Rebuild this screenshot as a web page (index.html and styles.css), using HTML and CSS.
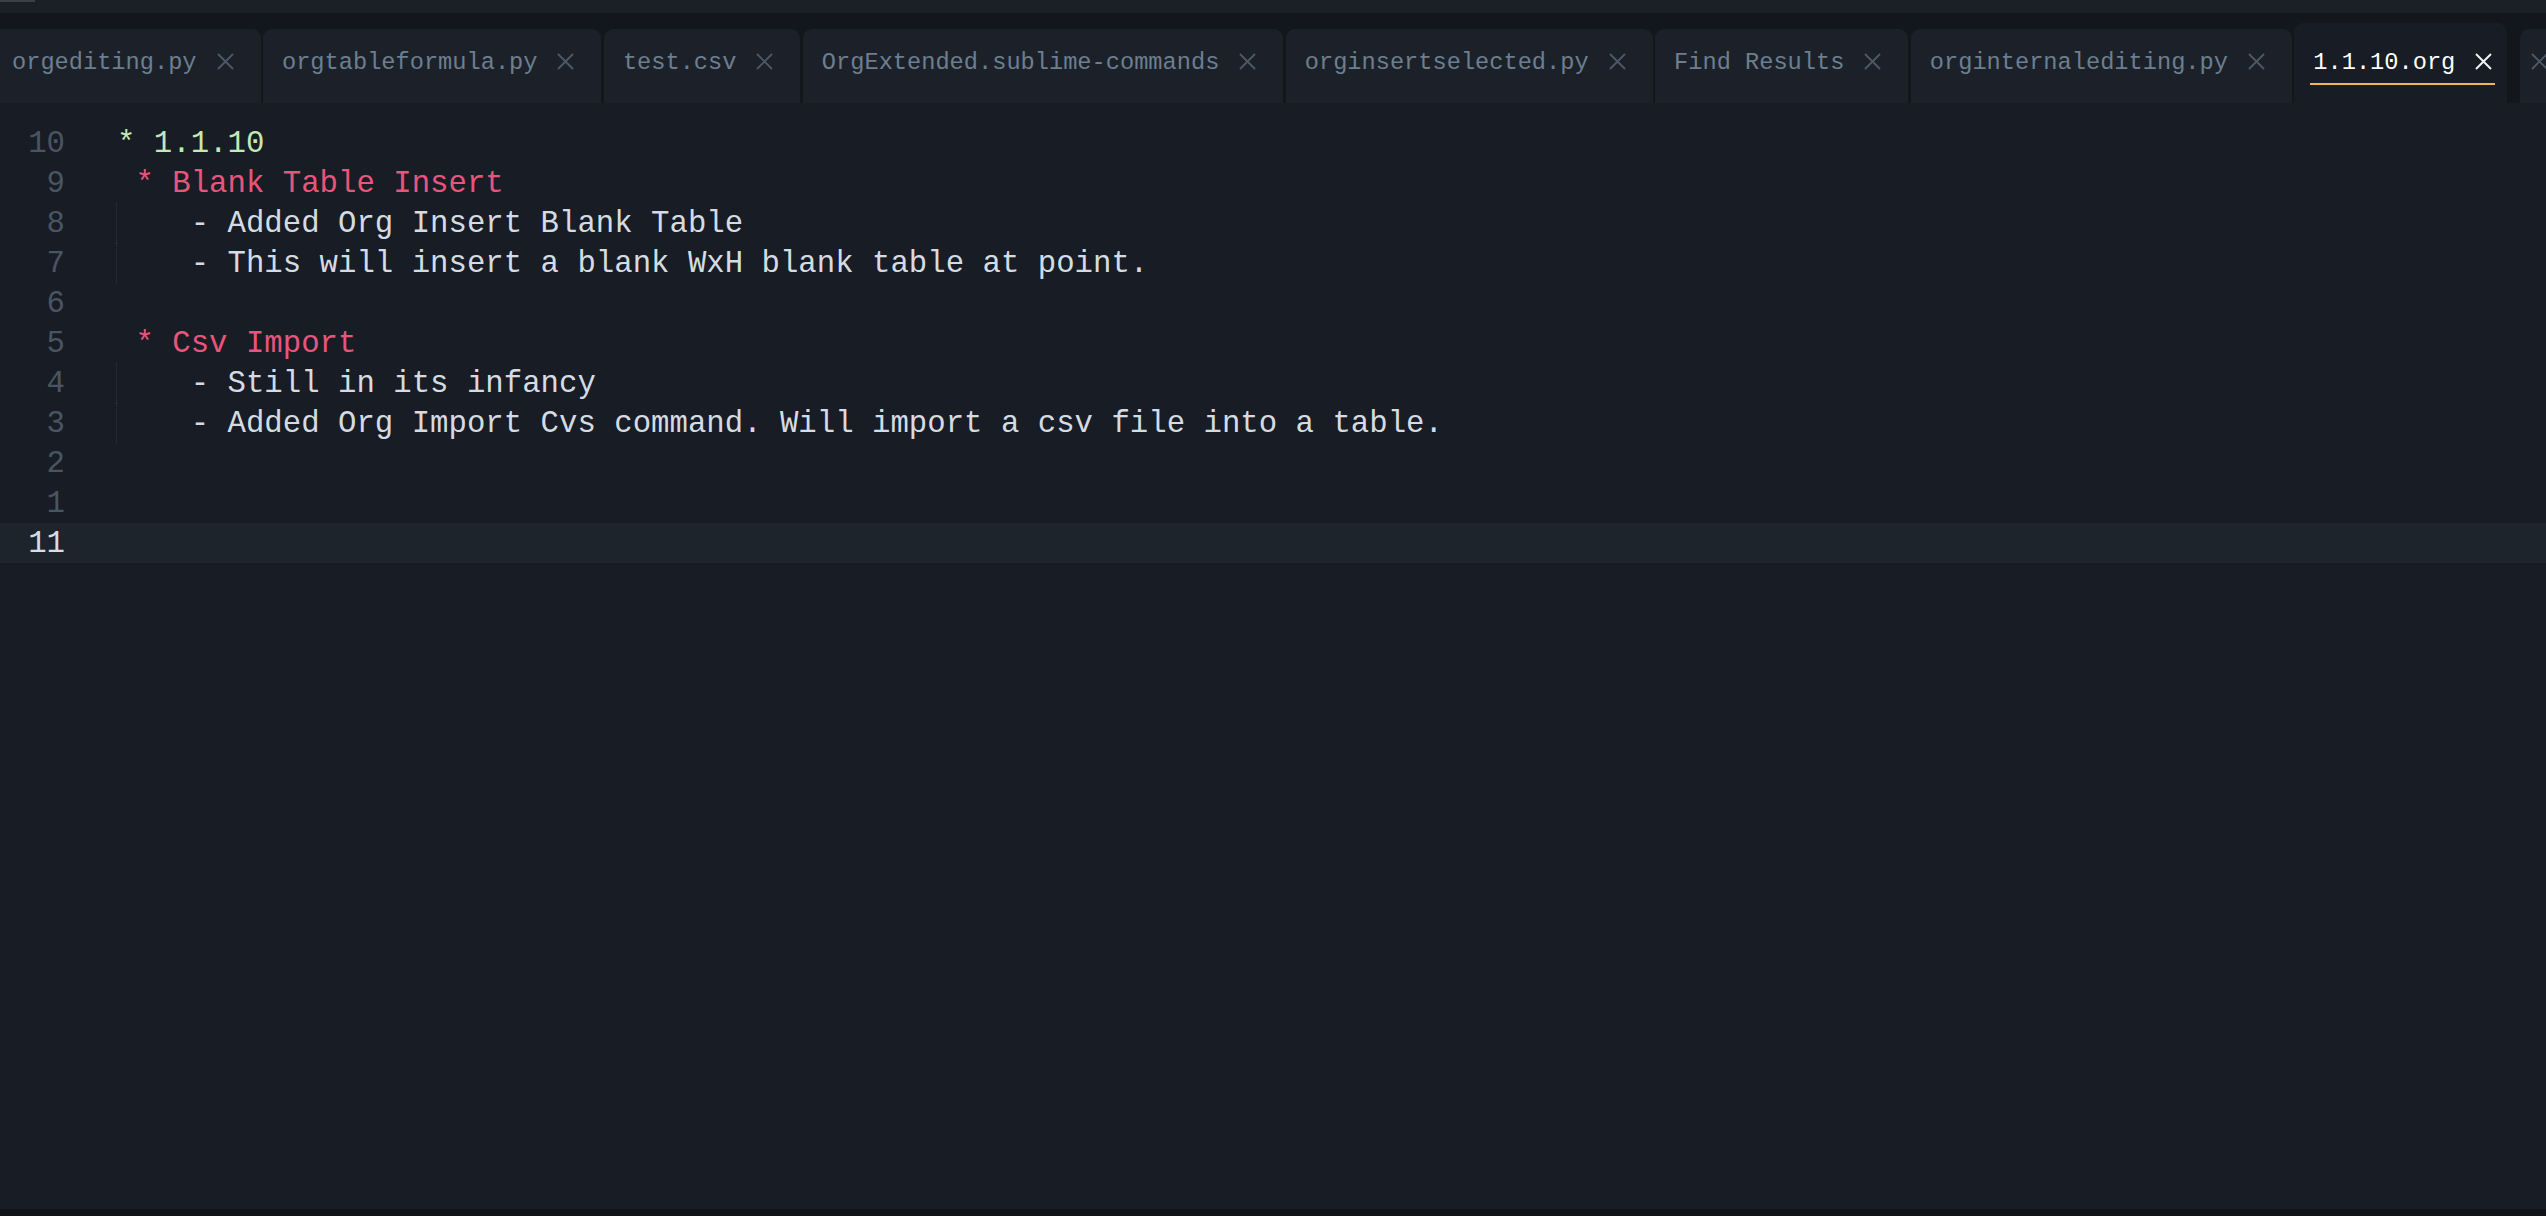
FILE: index.html
```html
<!DOCTYPE html>
<html>
<head>
<meta charset="utf-8">
<link rel="stylesheet" href="styles.css">
</head>
<body>
<div class="window">
  <div class="topstrip"><div class="topmark"></div></div>
  <div class="tabbar">
    <div class="tabs">
      <div class="tab"><span class="tname">orgediting.py</span><svg class="close" viewBox="0 0 17 17"><path d="M1 1L16 16M16 1L1 16"/></svg></div>
      <div class="tab"><span class="tname">orgtableformula.py</span><svg class="close" viewBox="0 0 17 17"><path d="M1 1L16 16M16 1L1 16"/></svg></div>
      <div class="tab"><span class="tname">test.csv</span><svg class="close" viewBox="0 0 17 17"><path d="M1 1L16 16M16 1L1 16"/></svg></div>
      <div class="tab"><span class="tname">OrgExtended.sublime-commands</span><svg class="close" viewBox="0 0 17 17"><path d="M1 1L16 16M16 1L1 16"/></svg></div>
      <div class="tab"><span class="tname">orginsertselected.py</span><svg class="close" viewBox="0 0 17 17"><path d="M1 1L16 16M16 1L1 16"/></svg></div>
      <div class="tab"><span class="tname">Find Results</span><svg class="close" viewBox="0 0 17 17"><path d="M1 1L16 16M16 1L1 16"/></svg></div>
      <div class="tab"><span class="tname">orginternalediting.py</span><svg class="close" viewBox="0 0 17 17"><path d="M1 1L16 16M16 1L1 16"/></svg></div>
      <div class="tab active"><div class="uline"><span class="tname">1.1.10.org</span><svg class="close" viewBox="0 0 17 17"><path d="M1 1L16 16M16 1L1 16"/></svg></div></div>
      <div class="tab partial"><svg class="close first" viewBox="0 0 17 17"><path d="M1 1L16 16M16 1L1 16"/></svg></div>
    </div>
  </div>
  <div class="editor">
    <div class="line"><span class="ln">10</span><span class="code h1">* 1.1.10</span></div>
    <div class="line"><span class="ln">9</span><span class="code h2"> * Blank Table Insert</span></div>
    <div class="line"><span class="ln">8</span><span class="code guide">    - Added Org Insert Blank Table</span></div>
    <div class="line"><span class="ln">7</span><span class="code guide">    - This will insert a blank WxH blank table at point.</span></div>
    <div class="line"><span class="ln">6</span><span class="code"></span></div>
    <div class="line"><span class="ln">5</span><span class="code h2"> * Csv Import</span></div>
    <div class="line"><span class="ln">4</span><span class="code guide">    - Still in its infancy</span></div>
    <div class="line"><span class="ln">3</span><span class="code guide">    - Added Org Import Cvs command. Will import a csv file into a table.</span></div>
    <div class="line"><span class="ln">2</span><span class="code"></span></div>
    <div class="line"><span class="ln">1</span><span class="code"></span></div>
    <div class="line current"><span class="ln">11</span><span class="code"></span></div>
  </div>
  <div class="bottombar"></div>
</div>
</body>
</html>
```

FILE: styles.css
```css
html, body {
  margin: 0;
  padding: 0;
  background: #181c24;
  overflow: hidden;
}
.window {
  width: 2546px;
  height: 1216px;
  display: flex;
  flex-direction: column;
  overflow: hidden;
  font-family: "Liberation Mono", "DejaVu Sans Mono", monospace;
}
.topstrip {
  height: 13px;
  background: #1b1f26;
  flex: none;
}
.topmark {
  width: 35px;
  height: 2px;
  background: #3a3f47;
}
.tabbar {
  height: 90px;
  flex: none;
  background: #13171d;
  display: flex;
  align-items: flex-end;
  overflow: hidden;
}
.tabs {
  display: flex;
  align-items: flex-end;
  gap: 2.4px;
  margin-left: -7px;
  white-space: nowrap;
}
.tab {
  flex: none;
  height: 74px;
  box-sizing: border-box;
  padding: 19px 27px 0 19px;
  background: #1c2129;
  border-radius: 9px 9px 0 0;
  display: flex;
  align-items: flex-start;
  color: #6b7f90;
  font-size: 23.67px;
  line-height: 30px;
}
.tname {
  display: block;
}
.close {
  width: 17px;
  height: 17px;
  margin-left: 20px;
  margin-top: 5px;
  fill: none;
  stroke: #4d5866;
  stroke-width: 1.9;
  flex: none;
}
.tab.active {
  height: 80px;
  padding: 25px 12px 0 16px;
  background: #181c24;
  color: #ffffff;
}
.tab.active .close {
  stroke: #f2f4f6;
}
.uline {
  display: flex;
  align-items: flex-start;
  padding: 0 3px 5px 3px;
  border-bottom: 2px solid #f2b65a;
}
.tab.partial {
  margin-left: 10px;
  padding: 19px 0 0 11px;
  width: 60px;
}
.close.first {
  margin-left: 0;
}
.editor {
  flex: 1;
  padding-top: 20px;
  background: #181c24;
  font-size: 30.7px;
}
.line {
  display: flex;
  height: 40px;
  box-sizing: border-box;
  padding-top: 2px;
  line-height: 38px;
}
.ln {
  width: 65px;
  flex: none;
  text-align: right;
  color: #4a5561;
}
.code {
  margin-left: 51px;
  border-left: 1px solid transparent;
  white-space: pre;
  color: #d5dbe2;
}
.code.guide {
  border-left: 1px dotted #2d343d;
  margin-top: -2px;
  padding-top: 2px;
}
.h1 {
  color: #c6e7b6;
}
.h2 {
  color: #e8557c;
}
.current {
  background: #1e242c;
}
.current .ln {
  color: #d6dde4;
}
.bottombar {
  height: 7px;
  flex: none;
  background: #101317;
}
```
